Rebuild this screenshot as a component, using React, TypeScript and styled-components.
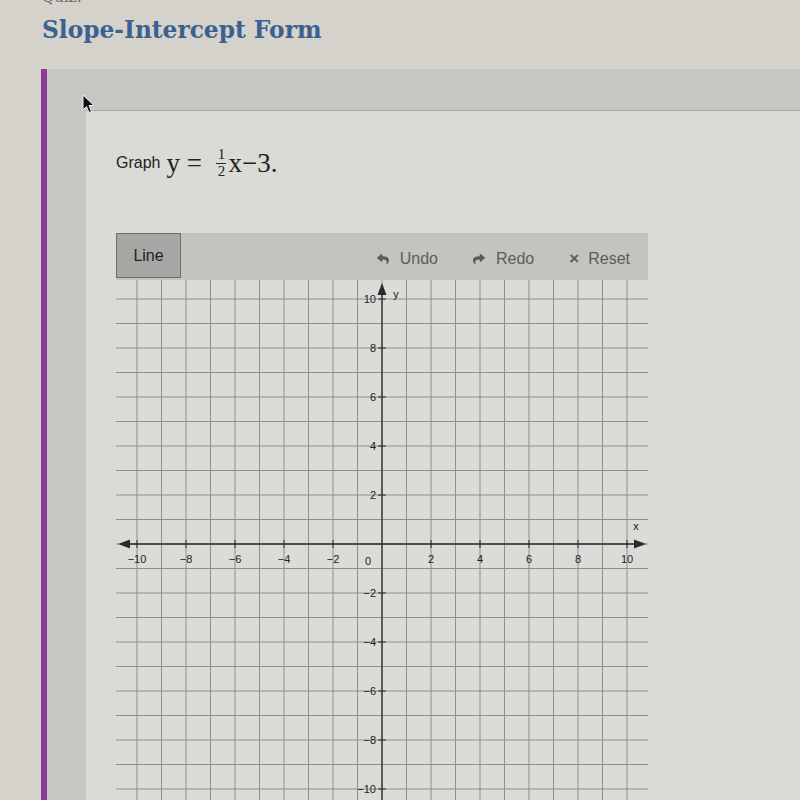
import React from "react";
import styled, { createGlobalStyle } from "styled-components";
import { FaReply, FaShare } from "react-icons/fa";

const UNIT = 24.5;
const GRID_W = 532;
const GRID_H = 540;
const OX = 266;
const OY = 264;

const GlobalStyle = createGlobalStyle`
  html, body {
    margin: 0;
    padding: 0;
    background: #d4d2cb;
    overflow: hidden;
  }
`;

const App: React.FC = () => {
  const steps = Array.from({ length: 21 }, (_, i) => i - 10);
  const evens = steps.filter((n) => n !== 0 && n % 2 === 0);
  const minus = (n: number) => (n < 0 ? "\u2212" + Math.abs(n) : String(n));

  return (
    <Page>
      <GlobalStyle />
      <Header>
        <QuizLabel>Quiz:</QuizLabel>
        <Title>Slope-Intercept Form</Title>
      </Header>
      <Panel>
        <Cursor width="14" height="20" viewBox="0 0 14 20">
          <path
            d="M1 1 L1 16 L4.5 12.5 L7 18.5 L9.5 17.5 L7 11.5 L12 11.5 Z"
            fill="#111"
            stroke="#eee"
            strokeWidth="1"
          />
        </Cursor>
        <Inner>
          <Prompt>
            <PromptWord>Graph</PromptWord>
            <MathText>
              y&nbsp;=&nbsp;&nbsp;
              <Fraction>
                <span>1</span>
                <FracBar />
                <span>2</span>
              </Fraction>
              x{"\u2212"}3.
            </MathText>
          </Prompt>

          <Widget>
            <Toolbar>
              <LineButton>Line</LineButton>
              <Actions>
                <Action>
                  <FaReply size={12} />
                  Undo
                </Action>
                <Action>
                  <FaShare size={12} />
                  Redo
                </Action>
                <Action>
                  <Times>{"\u00d7"}</Times>
                  Reset
                </Action>
              </Actions>
            </Toolbar>
            <GridBox>
              <svg width={GRID_W} height={GRID_H}>
                {steps.map((n) => (
                  <line
                    key={"v" + n}
                    x1={OX + n * UNIT}
                    x2={OX + n * UNIT}
                    y1={0}
                    y2={GRID_H}
                    stroke="#8f8f8d"
                    strokeWidth={1}
                  />
                ))}
                {steps.map((n) => (
                  <line
                    key={"h" + n}
                    x1={0}
                    x2={GRID_W}
                    y1={OY - n * UNIT}
                    y2={OY - n * UNIT}
                    stroke="#8f8f8d"
                    strokeWidth={1}
                  />
                ))}

                {/* axes */}
                <line x1={8} x2={GRID_W - 8} y1={OY} y2={OY} stroke="#2a2a2a" strokeWidth={1.3} />
                <line x1={OX} x2={OX} y1={8} y2={GRID_H} stroke="#2a2a2a" strokeWidth={1.3} />
                <polygon points={`2,${OY} 14,${OY - 4.5} 14,${OY + 4.5}`} fill="#2a2a2a" />
                <polygon
                  points={`${GRID_W - 2},${OY} ${GRID_W - 14},${OY - 4.5} ${GRID_W - 14},${OY + 4.5}`}
                  fill="#2a2a2a"
                />
                <polygon points={`${OX},3 ${OX - 4.5},15 ${OX + 4.5},15`} fill="#2a2a2a" />

                {evens.map((n) => (
                  <g key={"tx" + n}>
                    <line
                      x1={OX + n * UNIT}
                      x2={OX + n * UNIT}
                      y1={OY - 4}
                      y2={OY + 4}
                      stroke="#2a2a2a"
                    />
                    <AxisLabel x={OX + n * UNIT} y={OY + 19} textAnchor="middle">
                      {minus(n)}
                    </AxisLabel>
                  </g>
                ))}
                {evens.map((n) => (
                  <g key={"ty" + n}>
                    <line
                      x1={OX - 4}
                      x2={OX + 4}
                      y1={OY - n * UNIT}
                      y2={OY - n * UNIT}
                      stroke="#2a2a2a"
                    />
                    <AxisLabel x={OX - 6} y={OY - n * UNIT + 4} textAnchor="end">
                      {minus(n)}
                    </AxisLabel>
                  </g>
                ))}
                <AxisLabel x={OX - 14} y={OY + 21} textAnchor="middle">
                  0
                </AxisLabel>
                <AxisLabel x={520} y={OY - 14} textAnchor="middle">
                  x
                </AxisLabel>
                <AxisLabel x={OX + 14} y={18} textAnchor="middle">
                  y
                </AxisLabel>
              </svg>
            </GridBox>
          </Widget>
        </Inner>
      </Panel>
    </Page>
  );
};

const Page = styled.div`
  width: 800px;
  height: 800px;
  overflow: hidden;
  display: flex;
  flex-direction: column;
`;

const Header = styled.div`
  flex-shrink: 0;
  padding-left: 42px;
  height: 69px;
  box-sizing: border-box;
  overflow: hidden;
`;

const QuizLabel = styled.div`
  font-family: "DejaVu Serif", serif;
  font-size: 15px;
  line-height: 16px;
  color: #6a6a68;
  margin-top: -11px;
  height: 16px;
`;

const Title = styled.h1`
  margin: 10px 0 0;
  font-family: "DejaVu Serif", serif;
  font-weight: 600;
  font-size: 23.3px;
  line-height: 30px;
  color: #3a6190;
`;

const Panel = styled.div`
  position: relative;
  flex: 1 0 auto;
  margin-left: 41px;
  border-left: 6px solid #8b3c98;
  background: #c7c7c3;
  padding: 41px 0 0 39px;
`;

const Cursor = styled.svg`
  position: absolute;
  left: 35px;
  top: 25px;
`;

const Inner = styled.div`
  height: 100%;
  background: #dadad6;
  border-top: 1px solid #a9a9a5;
  padding: 38px 0 0 30px;
  box-sizing: border-box;
`;

const Prompt = styled.div`
  display: flex;
  align-items: center;
  gap: 6px;
  height: 28px;
`;

const PromptWord = styled.span`
  font-family: "Liberation Sans", Arial, sans-serif;
  font-size: 16px;
  color: #222;
`;

const MathText = styled.span`
  display: inline-flex;
  align-items: center;
  font-family: "Liberation Serif", "Times New Roman", serif;
  font-size: 27px;
  color: #222;
`;

const Fraction = styled.span`
  display: inline-flex;
  flex-direction: column;
  align-items: center;
  font-size: 15px;
  line-height: 13px;
  margin: 0 1px 0 0;
  padding: 0 1px;
`;

const FracBar = styled.span`
  width: 10px;
  height: 1px;
  background: #222;
  margin: 2px 0 1px;
`;

const Widget = styled.div`
  margin-top: 56px;
  width: ${GRID_W}px;
`;

const Toolbar = styled.div`
  display: flex;
  align-items: center;
  height: 47px;
  background: #c3c3c0;
`;

const LineButton = styled.div`
  width: 65px;
  height: 45px;
  box-sizing: border-box;
  display: flex;
  align-items: center;
  justify-content: center;
  background: #a6a6a5;
  border: 1px solid #6e6e6d;
  font-family: "Liberation Sans", Arial, sans-serif;
  font-size: 16px;
  color: #222;
  align-self: flex-start;
`;

const Actions = styled.div`
  margin-left: auto;
  display: flex;
  align-items: center;
  gap: 35px;
  padding-right: 18px;
  padding-top: 4px;
`;

const Action = styled.div`
  display: flex;
  align-items: center;
  gap: 11px;
  font-family: "Liberation Sans", Arial, sans-serif;
  font-size: 16px;
  color: #5c5c5b;
`;

const Times = styled.span`
  font-size: 17px;
  font-weight: 700;
  line-height: 1;
  margin-right: -2px;
`;

const GridBox = styled.div`
  background: #dbdbd8;
  height: ${GRID_H}px;
  overflow: hidden;
`;

const AxisLabel = styled.text`
  font-family: "Liberation Sans", Arial, sans-serif;
  font-size: 11px;
  fill: #222;
`;

export default App;
